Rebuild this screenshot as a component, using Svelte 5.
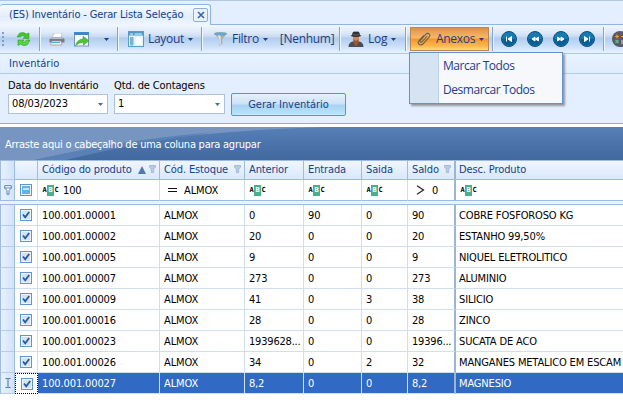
<script>
  const columns = [
    { key: 'code', label: 'Código do produto', sort: true, funnel: true, filter: '100', op: 'abc' },
    { key: 'stock', label: 'Cód. Estoque', funnel: true, filter: 'ALMOX', op: 'eq' },
    { key: 'prev', label: 'Anterior', op: 'abc' },
    { key: 'inn', label: 'Entrada', op: 'abc' },
    { key: 'out', label: 'Saida', op: 'abc' },
    { key: 'bal', label: 'Saldo', funnel: true, filter: '0', op: 'gt' },
    { key: 'desc', label: 'Desc. Produto', op: 'abc' }
  ];
  const data = [
    ['100.001.00001', 'ALMOX', '0', '90', '0', '90', 'COBRE FOSFOROSO KG'],
    ['100.001.00002', 'ALMOX', '20', '0', '0', '20', 'ESTANHO 99,50%'],
    ['100.001.00005', 'ALMOX', '9', '0', '0', '9', 'NIQUEL ELETROLITICO'],
    ['100.001.00007', 'ALMOX', '273', '0', '0', '273', 'ALUMINIO'],
    ['100.001.00009', 'ALMOX', '41', '0', '3', '38', 'SILICIO'],
    ['100.001.00016', 'ALMOX', '28', '0', '0', '28', 'ZINCO'],
    ['100.001.00023', 'ALMOX', '1939628...', '0', '0', '19396...', 'SUCATA DE ACO'],
    ['100.001.00026', 'ALMOX', '34', '0', '2', '32', 'MANGANES METALICO EM ESCAM'],
    ['100.001.00027', 'ALMOX', '8,2', '0', '0', '8,2', 'MAGNESIO']
  ];
  let selected = $state(8);
  const navs = [
    'M5.5 5.500v5M10.500 5.500v5L7 8z',
    'M8 6v4L5 8zM11.500 6v4L8.500 8z',
    'M8 6v4L11 8zM4.500 6v4L7.500 8z',
    'M10.500 5.500v5M5.500 5.500v5L9 8z'
  ];
</script>

{#snippet caret()}
  <svg class="caret" width="5" height="3" viewBox="0 0 5 3"><path d="M0 0h5L2.5 3z" fill="currentColor" /></svg>
{/snippet}

{#snippet funnel()}
  <svg class="funnel" width="7" height="8" viewBox="0 0 7 8"><path d="M0.5 0.5h6v1.7L4.7 4v3.5H2.3V4L.5 2.200z" fill="#b9cae2" stroke="#9fb4d2" stroke-width=".8" /></svg>
{/snippet}

{#snippet check()}
  <svg width="12" height="12" viewBox="0 0 12 12"><rect x=".5" y=".5" width="11" height="11" fill="#eef5fe" stroke="#5f95d4" /><rect x="2" y="2" width="8" height="8" fill="#d3e3f6" /><path d="M3 5.500l2.200 2.700L9.200 3" fill="none" stroke="#25599e" stroke-width="1.800" /></svg>
{/snippet}

<div class="window">
  <div class="tabs">
    <div class="tab">
      <span>(ES) Inventário - Gerar Lista Seleção</span>
      <button class="close" aria-label="Fechar"><svg width="8" height="8" viewBox="0 0 8 8"><path d="M1 1l6 6M7 1L1 7" stroke="#3467a8" stroke-width="1.600" /></svg></button>
    </div>
  </div>

  <div class="toolbar">
    <svg class="grip" width="4" height="16" viewBox="0 0 4 16"><path d="M1 1h2v2H1zM1 5h2v2H1zM1 9h2v2H1zM1 13h2v2H1z" fill="#7f9fc9" /></svg>
    <div class="group refresh">
      <svg width="15" height="16" viewBox="0 0 15 16"><path d="M1 6L3.500 2.200Q7 .5 10.500 3L13 2v5.500H7L9 5.500Q6.500 3.800 4.500 6z" fill="#45c52e" stroke="#24951c" stroke-width=".5" /><path d="M14 9l-2.500 4.500Q8 16 4.500 13L2 14.500V9h6l-2 1.800q2.500 1.700 4.500-1.800z" fill="#54d83a" stroke="#1f8b1a" stroke-width=".5" /></svg>
    </div>
    <div class="group print">
      <svg width="16" height="13" viewBox="0 0 16 13"><path d="M5 0h8l-1 5H3z" fill="#fff" stroke="#a9b0b8" stroke-width=".6" /><path d="M2.500 4.500h11L15.500 6v3.500H.5V6.500z" fill="#777d84" /><path d="M2 4.500h11.500l1 1.500H1.500z" fill="#b8bec5" /><path d="M3 8h9l1 4H1.500z" fill="#e8edf2" stroke="#8c939a" stroke-width=".6" /><path d="M3 9.500h8" stroke="#5aa5d8" /></svg>
      <svg width="16" height="15" viewBox="0 0 16 15"><rect x=".5" y=".5" width="14" height="13.500" fill="#f8fbff" stroke="#7594bd" /><path d="M0 0h15v3H0z" fill="#3e86ce" /><path d="M1.500 13.500Q3 7.500 9 7V4.200l6 4.500-5.500 4.500v-2.700q-4-.3-8 3z" fill="#4fc435" stroke="#31972a" stroke-width=".5" /></svg>
      {@render caret()}
    </div>
    <div class="group layout">
      <svg width="16" height="16" viewBox="0 0 16 16"><rect x=".5" y=".5" width="15" height="15" fill="#eef6fd" stroke="#5b9bc8" /><path d="M1 1h14v3.500H1z" fill="#4d9ac4" /><path d="M2 6h3.500v8.500H2z" fill="#77b3d7" /><path d="M2 2h3v2H2zM6.500 2H14v2H6.500z" fill="#92cae8" /><path d="M7 6h7v8H7z" fill="#fff" stroke="#c8dce9" stroke-width=".5" /></svg>
      <span>Layout</span>{@render caret()}
    </div>
    <div class="group filter">
      <svg width="13" height="14" viewBox="0 0 13 14"><path d="M0 1.500h13L8.300 7v5L5 14V7z" fill="#a7acb0" /><path d="M3.500 3h3L6.800 12.500 5.500 13V7z" fill="#e9edef" /><ellipse cx="6.500" cy="1.800" rx="6.200" ry="1.500" fill="#5bb0d5" stroke="#828d94" stroke-width=".5" /></svg>
      <span>Filtro</span>{@render caret()}
      <span class="none">[Nenhum]</span>
    </div>
    <div class="group log">
      <svg width="16" height="16" viewBox="0 0 16 16"><path d="M.5 16q0-4.500 4-5.500h7q4 1 4 5.500z" fill="#494d54" /><path d="M4.800 5h6.400l-.5 4L8 13 5.300 9z" fill="#d18a55" /><path d="M5 8l3 2 3-2-1 5-2 2.500L6 13z" fill="#9e572d" /><path d="M2.500 5Q4.500 3.800 4.700 1.500 6 0 8 .8 10.500 0 11.300 1.500q.2 2.300 2.200 3.500Q8 7.200 2.500 5z" fill="#2f3237" /><path d="M4.700 3.500q3.300 1 6.600 0" stroke="#777" fill="none" stroke-width=".7" /></svg>
      <span>Log</span>{@render caret()}
    </div>
    <div class="group attach">
      <div class="hot">
        <svg width="14" height="14" viewBox="0 0 14 14"><path d="M10.300 4L5 9.800q-1 .8-1.700.1t.1-1.600L9 2.200q1.700-1.500 3.200-.2 1.300 1.500-.1 3.100L5.900 12q-2 1.700-3.900.3-1.600-1.800.1-3.800L6.800 3.400" fill="none" stroke="#68604f" stroke-width="1.100" /></svg>
        <span>Anexos</span>{@render caret()}
        <div class="menu">
          <div class="item">Marcar Todos</div>
          <div class="item">Desmarcar Todos</div>
        </div>
      </div>
    </div>
    <div class="group navs">
      {#each navs as d}
        <svg width="16" height="16" viewBox="0 0 16 16"><circle cx="8" cy="8" r="7.500" fill="#1779ae" stroke="#0c5182" /><path d="M1.500 8a6.500 6.500 0 0 0 13 0z" fill="#0a5d92" /><path {d} fill="#fff" stroke="#fff" stroke-width="1" /></svg>
      {/each}
    </div>
    <div class="calc">
      <svg width="16" height="16" viewBox="0 0 16 16"><circle cx="8" cy="8" r="8" fill="#565b65" /><path d="M3 5.500h4M5 3.500v4M9 5.500h4" stroke="#f29a38" stroke-width="1.200" /><path d="M3.500 9l3 3M6.500 9l-3 3" stroke="#5cc08f" stroke-width="1.200" /><path d="M9 10h4M9 12h4" stroke="#ddd" /></svg>
    </div>
  </div>

  <div class="caption">Inventário</div>
  <div class="form">
    <label class="date"><span>Data do Inventário</span><div class="field"><b>08/03/2023</b>{@render caret()}</div></label>
    <label class="count"><span>Qtd. de Contagens</span><div class="field"><b>1</b>{@render caret()}</div></label>
    <button class="generate">Gerar Inventário</button>
  </div>

  <div class="groupband">
    <svg class="swoosh" width="623" height="33" viewBox="0 0 623 33" preserveAspectRatio="none">
      <defs><linearGradient id="band" x1="0" y1="0" x2="0" y2="1"><stop offset="0" stop-color="#5680b7" /><stop offset="1" stop-color="#41689f" /></linearGradient></defs>
      <rect width="623" height="33" fill="url(#band)" />
      <path d="M0 0H325Q160 5 35 33H0z" fill="#7795c1" />
      <path d="M35 33Q120 13 215 5Q130 17 66 33z" fill="#5a80b5" />
    </svg>
    <span>Arraste aqui o cabeçalho de uma coluna para agrupar</span>
  </div>

  <div class="grid">
    <div class="row head">
      <div class="cell ind"></div><div class="cell chk"></div>
      {#each columns as c}
        <div class="cell {c.key}">
          <span>{c.label}</span>
          {#if c.sort}<svg class="sort" width="8" height="8" viewBox="0 0 8 8"><path d="M4 0l4 8H0z" fill="#5479ae" /></svg>{/if}
          {#if c.funnel}{@render funnel()}{/if}
        </div>
      {/each}
    </div>
    <div class="row filters">
      <div class="cell ind"><svg width="8" height="10" viewBox="0 0 8 10"><path d="M.7.7h6.600v2.500L5 5.500v3.800H3V5.500L.7 3.200zM.7 3h6.600" fill="#fff" stroke="#5a7fb4" /></svg></div>
      <div class="cell chk"><svg width="12" height="12" viewBox="0 0 12 12"><rect x=".5" y=".5" width="11" height="11" fill="#eef7ff" stroke="#5f95d4" /><rect x="2" y="2" width="8" height="8" fill="#5cb5ee" /><path d="M3 4h6v2H3z" fill="#bfe6ff" /></svg></div>
      {#each columns as c}
        <div class="cell {c.key}">
          {#if c.op === 'abc'}
            <span class="abc"><i>A</i><i class="mid">B</i><i>C</i></span>
          {:else if c.op === 'eq'}
            <svg class="eq" width="10" height="6" viewBox="0 0 10 6"><path d="M0 1.500h9M0 4.500h9" stroke="#111" /></svg>
          {:else}
            <svg class="gt" width="9" height="10" viewBox="0 0 9 10"><path d="M1 .8L7.500 5 1 9.200" fill="none" stroke="#222" stroke-width="1.200" /></svg>
          {/if}
          {#if c.filter}<span>{c.filter}</span>{/if}
        </div>
      {/each}
    </div>
    <div class="gap"></div>
    {#each data as r, i}
      <div class="row body" class:selected={i === selected}>
        <div class="cell ind">
          {#if i === selected}<svg width="6" height="10" viewBox="0 0 6 10"><path d="M.5.5h2l.5.5.5-.5h2M3 1v8M.5 9.500h2L3 9l.5.5h2" fill="none" stroke="#496fa7" /></svg>{/if}
        </div>
        <div class="cell chk">{@render check()}</div>
        {#each r as v, j}
          <div class="cell {columns[j].key}"><span>{v}</span></div>
        {/each}
      </div>
    {/each}
  </div>
</div>

<style>
  :global(body) { background: #fff; }
  .window {
    width: 623px; height: 403px; overflow: hidden; background: #fff; color: #000;
    font-family: "DejaVu Sans Condensed", "DejaVu Sans", sans-serif; font-stretch: condensed;
    font-size: 11px; letter-spacing: -0.12px; line-height: 14px; white-space: nowrap;
    display: flex; flex-direction: column; box-sizing: border-box;
  }
  .window * { box-sizing: border-box; }
  svg { display: block; flex: none; }
  button { font: inherit; letter-spacing: inherit; padding: 0; margin: 0; }

  .tabs { height: 25px; flex: none; display: flex; align-items: flex-end; background: #e3eefe; border-top: 1px solid #b3c7e0; border-bottom: 1px solid #8fb5e4; }
  .tab {
    height: 21px; width: 211px; margin-bottom: -1px; padding-left: 9px; display: flex; align-items: center; justify-content: space-between;
    border: 1px solid #8fb5e4; border-bottom: 0; border-left: 0; border-radius: 3px 3px 0 0;
    background: linear-gradient(#f7faff, #e2eefe 60%, #eff6ff); color: #15428b;
    letter-spacing: -0.15px;
  }
  .close { width: 15px; height: 14px; margin-right: 2px; border: 1px solid #8eaedb; border-radius: 2px; background: #eaf3ff; display: flex; align-items: center; justify-content: center; }

  .toolbar {
    height: 28px; flex: none; display: flex; align-items: center; color: #1e3c87;
    background: linear-gradient(#f0f6ff 0, #dce8f8 8px, #c8daf0 12px, #b1cdef 13px, #c7dcf7 20px, #e4f0ff 27px);
    font-family: "Open Sans", sans-serif; font-stretch: normal; font-size: 12px; letter-spacing: -0.3px;
  }
  .grip { margin-left: 1px; }
  .group { height: 24px; flex: none; display: flex; align-items: center; border-right: 1px solid #7fa3d3; box-shadow: 1px 0 #eef6ff; }
  .refresh { width: 35px; padding-left: 11px; }
  .print { width: 78px; padding-left: 9px; gap: 9px; color: #15428b; }
  .print .caret { margin-left: 5px; }
  .layout { width: 84px; padding-left: 10px; gap: 4px; }
  .filter { width: 138px; padding-left: 12px; gap: 4px; }
  .filter > span:first-of-type { margin-left: 1px; }
  .filter > .none { margin-left: 8px; }
  .log { width: 66px; padding-left: 8px; gap: 4px; }
  .attach { width: 87px; padding-left: 4px; }
  .hot { position: relative; width: 79px; height: 24px; padding-left: 6px; display: flex; align-items: center; gap: 5px; border: 1px solid #b88755; background: linear-gradient(#d9934b 0, #f5b266 8px, #fab65c 10px, #f5942b 11px, #fcb84f 18px, #ffdf70); }
  .hot > .caret { margin-left: -1px; }
  .menu { position: absolute; z-index: 3; left: -2px; top: 24px; width: 154px; height: 52px; padding: 1px; border: 1px solid #6593cf; background: linear-gradient(90deg, #d5e3f2 28px, #bad0e9 28px, #bad0e9 29px, #f6f8fb 29px); box-shadow: 2px 2px 2px #777b; }
  .item { height: 24px; line-height: 24px; padding-left: 32px; letter-spacing: -0.45px; }
  .navs { width: 111px; padding-left: 8px; gap: 10px; }
  .calc { padding-left: 8px; }

  .caption { height: 21px; flex: none; padding: 3px 0 0 9px; border-top: 1px solid #abc9ef; border-bottom: 1px solid #b3cdef; background: linear-gradient(#e9f3ff, #dfecfd); color: #15428b; letter-spacing: 0; }
  .form { height: 50px; flex: none; display: flex; padding-left: 8px; background: #e3eefe; border-bottom: 1px solid #8eaedb; }
  label { display: block; padding-top: 5px; }
  .date { width: 106px; }
  .count { width: 117px; }
  .field { display: flex; align-items: center; justify-content: space-between; height: 20px; margin-top: 1px; padding: 0 4px 0 3px; border: 1px solid #abc1de; background: #fff; color: #3b6fb5; }
  .field b { color: #000; font-weight: normal; }
  .date .field { width: 100px; }
  .count .field { width: 111px; }
  .generate { width: 115px; height: 23px; margin-top: 19px; color: #15428b; border: 1px solid #5e92d4; border-radius: 2px; background: linear-gradient(#e5f0fb 0, #cfe2f6 10px, #a9d1f1 11px, #b6e4fb 20px, #d3f2ff); letter-spacing: -0.05px; }

  .groupband { position: relative; height: 33px; flex: none; margin-top: 3px; display: flex; align-items: center; padding: 3px 0 0 5px; color: #fff; letter-spacing: -0.24px; }
  .swoosh { position: absolute; inset: 0; }
  .groupband span { position: relative; }

  .grid { display: flex; flex-direction: column; }
  .row { display: flex; height: 21px; }
  .cell { display: flex; align-items: center; flex: none; padding-left: 4px; border-right: 1px solid #d0dff0; border-bottom: 1px solid #d0dff0; overflow: hidden; }
  .head { height: 20px; color: #15428b; letter-spacing: -0.12px; }
  .head .cell { border-right-color: #9ebbe2; border-bottom-color: #9ebbe2; background: linear-gradient(#f0f6ff, #d9e8fb); border-top: 1px solid #9ebbe2; }
  .cell.ind { width: 15px; padding: 0 0 0 1px; justify-content: center; border-left: 1px solid #9ebbe2; border-right-color: #9ebbe2; border-bottom-color: #b5cdea; background: linear-gradient(90deg, #e9f2fd, #d2e3f8); }
  .cell.chk { width: 23px; padding: 0; justify-content: center; }
  .cell.code { width: 122px; }
  .cell.stock { width: 85px; }
  .cell.prev { width: 59px; }
  .cell.inn { width: 58px; }
  .cell.out { width: 46px; }
  .cell.bal { width: 48px; border-right: 2px solid #9bb5d4; }
  .cell.desc { width: 168px; border-right: 0; }
  .body .cell > span { padding-top: 1px; }
  .body .prev, .body .bal { letter-spacing: -0.2px; }
  .body .desc { letter-spacing: -0.15px; }
  .cell.desc { padding-left: 3px; }
  .funnel { margin-left: auto; margin-right: 3px; margin-bottom: 3px; }
  .sort { margin-left: 6px; }
  .filters .cell { gap: 4px; border-bottom-color: #9ebbe2; padding-left: 4px; }
  .filters .cell.ind, .filters .cell.chk { padding-left: 0; }
  .filters .cell > span:not(.abc) { padding-top: 1px; }
  .gap { height: 4px; background: #e9f2fd; border-bottom: 1px solid #9ebbe2; }
  .abc { display: flex; height: 11px; align-items: center; }
  .abc i { font: bold 7px/11px "DejaVu Sans Mono", monospace; letter-spacing: 0; width: 5px; text-align: center; }
  .abc .mid { width: 7px; height: 11px; background: #4aaf8b; color: #fff; }
  .eq { margin-left: 4px; margin-right: 2px; }
  .gt { margin-left: 4px; margin-right: 3px; }
  .selected .cell:not(.ind):not(.chk) { background: #316ac5; color: #fff; }
  .selected .chk { border: 1px dotted #000; }
</style>
